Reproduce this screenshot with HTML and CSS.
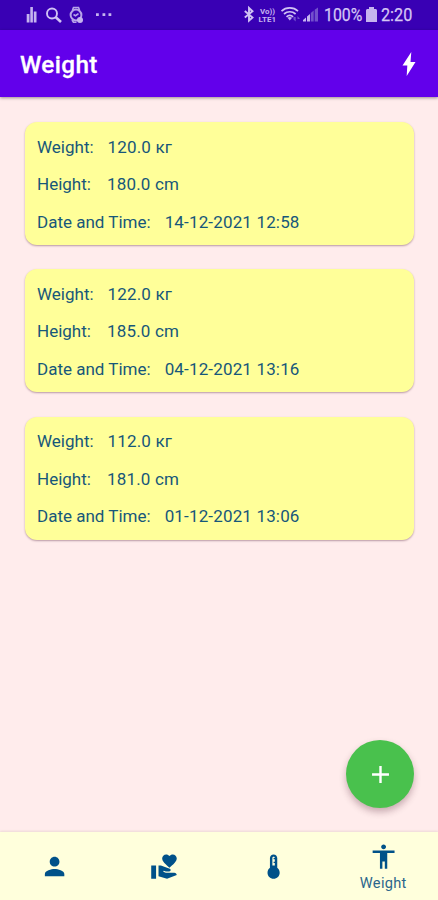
FILE: index.html
```html
<!DOCTYPE html>
<html lang="en">
<head>
<meta charset="utf-8">
<title>Weight</title>
<link rel="stylesheet" href="styles.css">
</head>
<body>
<div class="screen">
  <div class="status">
    <svg class="status-left" width="90" height="20" viewBox="0 0 90 20">
      <g class="soft"><path d="M.7 11h2.800v8.500H.7zM4.300 4h2.600v15.500H4.300zM7.800 8.500h2.700v11H7.800z"/></g>
      <g class="line"><circle cx="26" cy="10.500" r="5" stroke-width="1.900"/><path d="m29.800 14.200 5.200 4.800" stroke-width="2.600"/></g>
      <g class="line dim"><circle cx="50" cy="12" r="5.400" stroke-width="2"/><path d="m46.500 7 1-2.500h5l1 2.500M46 17l1.500 2.300h3M47.500 11.500l2 1.200 3-2" stroke-width="1.600"/></g>
      <circle class="soft" cx="54" cy="17" r="3"/>
      <path class="soft" d="M70 10.300h2.800v2.800H70zM76.500 10.300h2.800v2.800h-2.800zM82.500 10.300h2.800v2.800h-2.800z"/>
    </svg>
    <div class="status-right">
      <svg width="76" height="20" viewBox="0 0 76 20">
        <path class="line" d="m.8 6 7.700 6.500-3.500 3.200V3l3.500 3.200-7.700 6.300" stroke-width="1.900"/>
        <text class="tiny" x="16" y="8.800" textLength="15" lengthAdjust="spacingAndGlyphs">Vo))</text>
        <text class="tiny" x="14.500" y="16.800" textLength="17.500" lengthAdjust="spacingAndGlyphs">LTE1</text>
        <g class="line" stroke-width="1.700"><path d="M37.500 6.200c4.500-4.300 12-4.300 16.500 0M40 9c3.300-3 8.300-3 11.600 0M42.500 11.800c2-1.700 4.600-1.700 6.600 0"/></g>
        <path class="soft" d="m43.500 12.800 2.300 2.700 2.300-2.700c-1.200-1.100-3.400-1.100-4.600 0z"/>
        <path class="faint" d="M49.500 12h2.200v4.500l-2.200-2zm4-1 2.500 3h-2.500z"/>
        <path class="soft" d="M59 16.500V15l3-2.500v4zM63 16.500v-5l3-2.500v7.500z"/>
        <path class="faint" d="M66.800 16.500V8l2.900-2.400v10.900zM70.700 16.500V4.700L74 2.500v14z"/>
      </svg>
      <span class="battery-text">100%</span>
      <svg class="battery" width="11" height="15" viewBox="0 0 11 15"><path class="soft" d="M3 0h5v2h1.500c.8 0 1.500.7 1.500 1.500V15H0V3.500C0 2.700.7 2 1.500 2H3z"/></svg>
      <span class="clock">2:20</span>
    </div>
  </div>
  <header class="bar">
    <h1>Weight</h1>
    <svg class="bolt" width="14" height="24" viewBox="0 0 13 24"><path d="M8.800 0 0 13.500h4.800L4.200 24 13 10H8z"/></svg>
  </header>
  <main class="list">
    <section class="card">
      <p><span class="label">Weight:</span><span class="value">120.0 кг</span></p>
      <p><span class="label">Height:</span><span class="value">180.0 cm</span></p>
      <p><span class="label">Date and Time:</span><span class="value">14-12-2021 12:58</span></p>
    </section>
    <section class="card">
      <p><span class="label">Weight:</span><span class="value">122.0 кг</span></p>
      <p><span class="label">Height:</span><span class="value">185.0 cm</span></p>
      <p><span class="label">Date and Time:</span><span class="value">04-12-2021 13:16</span></p>
    </section>
    <section class="card">
      <p><span class="label">Weight:</span><span class="value">112.0 кг</span></p>
      <p><span class="label">Height:</span><span class="value">181.0 cm</span></p>
      <p><span class="label">Date and Time:</span><span class="value">01-12-2021 13:06</span></p>
    </section>
  </main>
  <button class="fab" aria-label="Add"><svg width="29" height="29" viewBox="0 0 24 24"><path d="M19 13h-6v6h-2v-6H5v-2h6V5h2v6h6z"/></svg></button>
  <nav class="nav">
    <a><svg viewBox="0 0 24 24"><path d="M12 12c2.210 0 4-1.790 4-4s-1.790-4-4-4-4 1.790-4 4 1.790 4 4 4zm0 2c-2.670 0-8 1.340-8 4v2h16v-2c0-2.660-5.330-4-8-4z"/></svg></a>
    <a><svg viewBox="0 0 24 24"><path d="M1 11h4v11H1zM16 3.250C16.650 2.490 17.660 2 18.700 2 20.550 2 22 3.450 22 5.300c0 2.270-2.910 4.900-6 7.700-3.090-2.810-6-5.440-6-7.700C10 3.450 11.450 2 13.300 2c1.040 0 2.050.49 2.700 1.250zM20 17h-7l-2.090-.73.33-.94L13 16h2.820c.65 0 1.180-.53 1.180-1.180 0-.49-.31-.93-.77-1.110L8.970 11H7v9.020L14 22l8-3c-.01-1.100-.89-2-2-2z"/></svg></a>
    <a><svg viewBox="0 0 24 24"><path d="M15 13V5c0-1.660-1.340-3-3-3S9 3.340 9 5v8c-1.210.91-2 2.370-2 4 0 2.760 2.240 5 5 5s5-2.240 5-5c0-1.630-.79-3.090-2-4zm-4-8c0-.55.45-1 1-1s1 .45 1 1h-1v1h1v2h-1v1h1v2h-2V5z"/></svg></a>
    <a class="active"><svg viewBox="0 0 24 24"><path d="M12 2c1.100 0 2 .9 2 2s-.9 2-2 2-2-.9-2-2 .9-2 2-2zm9 7h-6v13h-2v-6h-2v6H9V9H3V7h18z"/></svg><span>Weight</span></a>
  </nav>
</div>
</body>
</html>
```
FILE: styles.css
```css
* { box-sizing: border-box; }
body { margin: 0; font-family: Roboto, sans-serif; }
h1, p { margin: 0; }
.screen {
  position: relative;
  display: flex;
  flex-direction: column;
  width: 438px;
  height: 900px;
  overflow: hidden;
  background: #ffecec;
}
.status {
  display: flex;
  justify-content: space-between;
  height: 30px;
  padding: 3px 25px 0 26px;
  background: #3900b4;
  color: #d5c7f5;
}
.status-right { display: flex; align-items: flex-start; padding-top: 2px; }
.soft { fill: #c5b4ef; }
.faint { fill: #7250cc; }
.line { fill: none; stroke: #d0c2f4; }
.dim { stroke: #b7a3e9; }
.tiny { font-size: 7px; font-weight: 700; fill: #c5b4ef; }
.battery-text, .clock { font-size: 18px; line-height: 20px; transform-origin: left center; white-space: nowrap; -webkit-text-stroke: .25px currentColor; }
.battery-text { width: 38px; margin-left: 4px; transform: scaleX(.88); }
.battery { margin: 2px 4px 0 4px; }
.clock { width: 32px; transform: scaleX(.9); }
.bar {
  z-index: 1;
  display: flex;
  justify-content: space-between;
  align-items: center;
  height: 67px;
  padding: 0 22px 0 20px;
  background: #6200eb;
  color: #fff;
  box-shadow: 0 1px 3px rgba(0, 0, 0, .4);
}
h1 { font-size: 24.3px; font-weight: 500; line-height: 30px; padding-top: 3px; letter-spacing: .35px; -webkit-text-stroke: .3px #fff; }
.bolt { fill: #fff; }
.list { display: flex; flex-direction: column; gap: 24.3px; flex: 1; padding: 25px 24px 0 25px; }
.card {
  display: flex;
  flex-direction: column;
  height: 123px;
  padding: 6.6px 12px 0;
  border-radius: 12px;
  background: #ffff99;
  box-shadow: 0 1px 2px rgba(80, 30, 60, .4);
}
.card p { display: flex; height: 37.6px; line-height: 37.6px; font-size: 17px; color: #17577a; white-space: nowrap; }
.label { min-width: 56px; }
.value { margin-left: 14px; letter-spacing: .16px; }
.fab {
  position: absolute;
  left: 346px;
  top: 740px;
  display: flex;
  align-items: center;
  justify-content: center;
  width: 68px;
  height: 68px;
  padding: 0;
  border: 0;
  border-radius: 50%;
  background: #49c14d;
  box-shadow: 0 4px 7px rgba(70, 20, 40, .3);
}
.fab svg { fill: #fff; }
.nav {
  display: flex;
  height: 68px;
  background: #ffffdc;
  box-shadow: 0 -1px 2px rgba(80, 50, 30, .1);
}
.nav a { flex: 1; display: flex; flex-direction: column; align-items: center; padding-top: 20px; color: #005189; }
.nav svg { width: 29.2px; height: 29.2px; fill: currentColor; flex: none; }
.nav .active { padding-top: 10px; }
.nav span { font-size: 14.600px; line-height: 18px; margin-top: 3px; letter-spacing: .3px; color: #2b668c; }
```
